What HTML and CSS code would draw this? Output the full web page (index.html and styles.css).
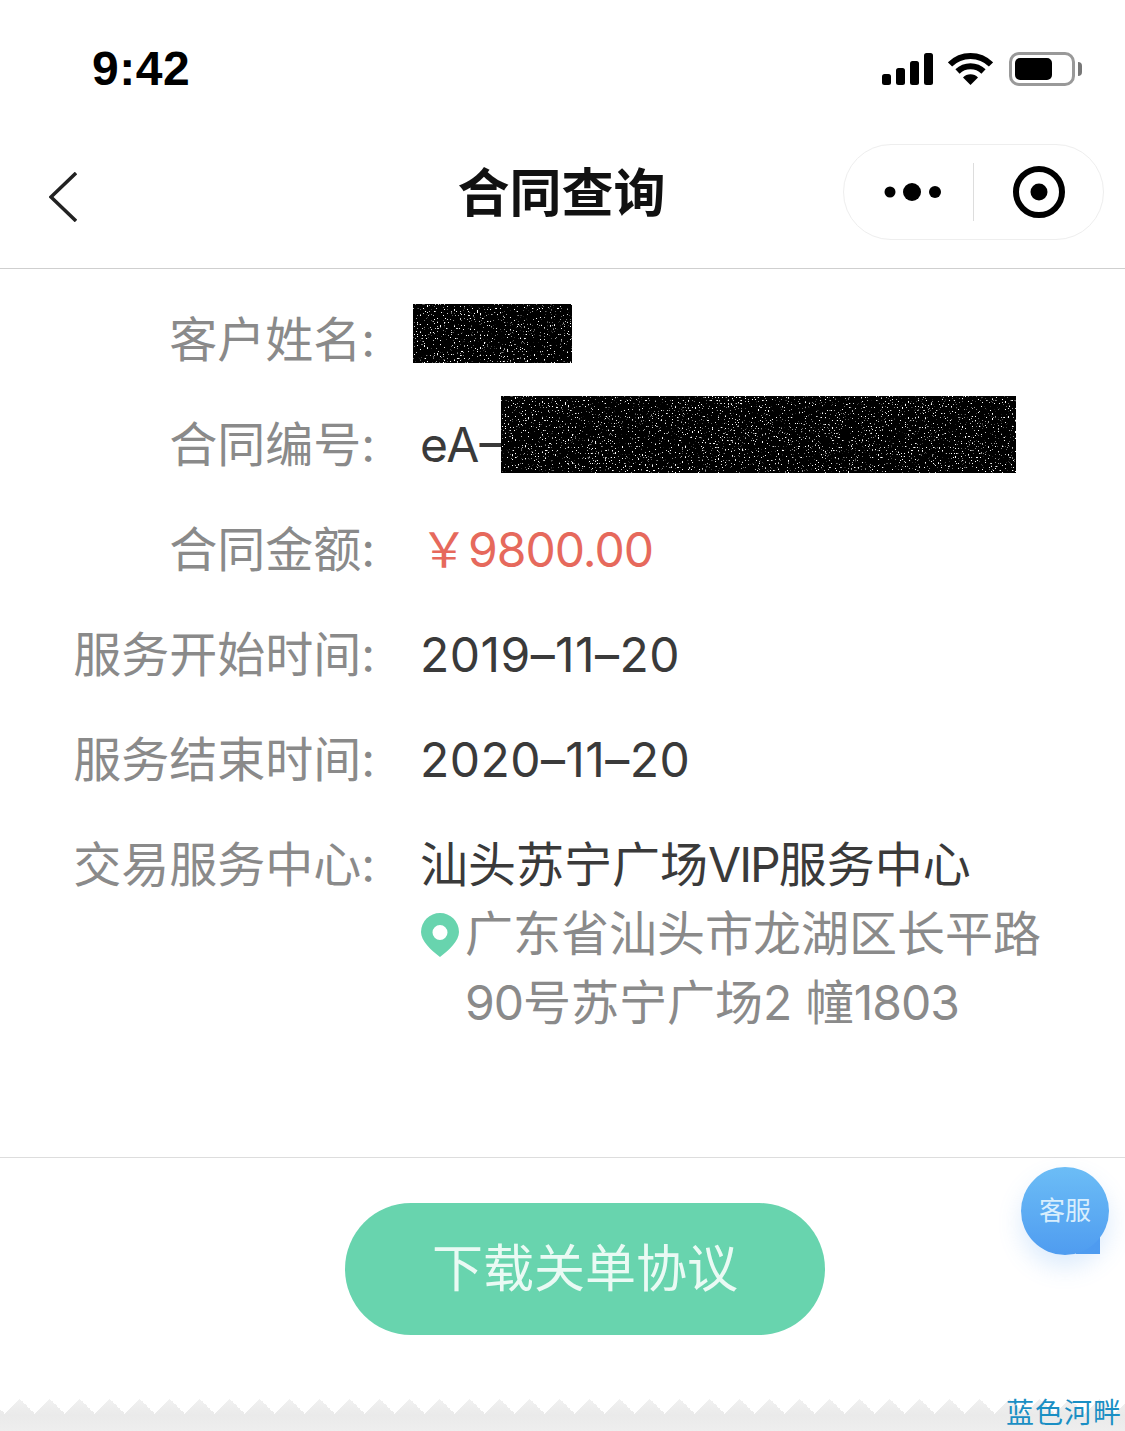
FILE: index.html

```html
<!DOCTYPE html>
<html lang="zh-CN">
<head>
  <meta charset="UTF-8" />
  <meta name="viewport" content="width=device-width, initial-scale=1.0"/>
  <title>合同查询</title>
  <link rel="stylesheet" href="styles.css">
</head>
<body>
  <svg class="defs" width="0" height="0" aria-hidden="true">
    <filter id="noise" x="0" y="0" width="100%" height="100%" color-interpolation-filters="sRGB">
      <feTurbulence type="fractalNoise" baseFrequency="0.7" numOctaves="1" seed="7"/>
      <feColorMatrix values="0 0 0 0 1  0 0 0 0 1  0 0 0 0 1  14 0 0 0 -8.9"/>
    </filter>
  </svg>

  <div class="status-bar">
    <span class="time">9:42</span>
    <div class="status-icons">
      <svg width="51" height="32" viewBox="0 0 51 32">
        <rect x="0" y="21" width="9" height="11" rx="2.5"/>
        <rect x="14" y="15" width="9" height="17" rx="2.5"/>
        <rect x="28" y="8" width="9" height="24" rx="2.5"/>
        <rect x="42" y="0" width="9" height="32" rx="2.5"/>
      </svg>
      <svg width="45" height="32" viewBox="0 0 45 32">
        <path d="M2 11.5a29 29 0 0 1 41 0" fill="none" stroke="#000" stroke-width="6"/>
        <path d="M9.500 18.500a18.500 18.500 0 0 1 26 0" fill="none" stroke="#000" stroke-width="6"/>
        <path d="M15 24.500a10.500 10.500 0 0 1 15 0L22.500 32z"/>
      </svg>
      <div class="battery">
        <div class="battery-body"><div class="battery-level"></div></div>
        <div class="battery-nub"></div>
      </div>
    </div>
  </div>

  <header class="nav">
    <svg class="back" width="28" height="50" viewBox="0 0 28 50">
      <path d="M27 1L2 25l25 24" fill="none" stroke="#222" stroke-width="3.500"/>
    </svg>
    <h1>合同查询</h1>
    <div class="capsule">
      <svg width="58" height="20" viewBox="0 0 58 20">
        <circle cx="6" cy="10" r="5.500"/>
        <circle cx="28" cy="10" r="9"/>
        <circle cx="51" cy="10" r="6"/>
      </svg>
      <span class="capsule-line"></span>
      <svg width="52" height="52" viewBox="0 0 52 52">
        <circle cx="26" cy="26" r="23" fill="none" stroke="#000" stroke-width="6"/>
        <circle cx="26" cy="26" r="8.500"/>
      </svg>
    </div>
  </header>

  <main class="info">
    <div class="row">
      <div class="label">客户姓名:</div>
      <div class="value"><svg class="redact redact-name"><rect width="100%" height="100%"/><rect class="specks" width="100%" height="100%"/></svg></div>
    </div>
    <div class="row">
      <div class="label">合同编号:</div>
      <div class="value">eA–<svg class="redact redact-no"><rect width="100%" height="100%"/><rect class="specks" width="100%" height="100%"/></svg></div>
    </div>
    <div class="row">
      <div class="label">合同金额:</div>
      <div class="value price">￥<span class="num">9800.00</span></div>
    </div>
    <div class="row">
      <div class="label">服务开始时间:</div>
      <div class="value date">2019–11–20</div>
    </div>
    <div class="row">
      <div class="label">服务结束时间:</div>
      <div class="value date">2020–11–20</div>
    </div>
    <div class="row">
      <div class="label">交易服务中心:</div>
      <div class="center">
        <div class="value">汕头苏宁广场<span class="vip">VIP</span>服务中心</div>
        <div class="address">
          <svg class="pin" width="38" height="44" viewBox="0 0 38 44">
            <path fill-rule="evenodd" fill="#68d4ae" d="M19 0a19 19 0 0 1 19 19c0 9-10 18-19 25C10 37 0 28 0 19A19 19 0 0 1 19 0zm0 12a7.500 7.500 0 1 0 0 15 7.500 7.500 0 0 0 0-15z"/>
          </svg>
          <div>广东省汕头市龙湖区长平路<br><span class="num">90</span>号苏宁广场2 幢<span class="num">1803</span></div>
        </div>
      </div>
    </div>
  </main>

  <footer class="footer">
    <button class="download"><span>下载关单协议</span></button>
    <div class="zigzag"></div>
  </footer>

  <div class="service">客服</div>
  <div class="watermark">蓝色河畔</div>
</body>
</html>
```

FILE: styles.css

```css
* { box-sizing: border-box; }

html, body {
  margin: 0;
  height: 1431px;
  overflow: hidden;
}
body {
  position: relative;
  width: 1125px;
  display: flex; flex-direction: column;
  background: #fff; color: #3a3a3a;
  font-family: "Inter", "Noto Sans CJK SC", sans-serif;
  font-size: 48px;
}
.defs { position: absolute; }

.status-bar {
  height: 130px; flex: none;
  display: flex; justify-content: space-between; align-items: flex-start;
  padding: 46px 43px 0 92px;
}
.time {
  font-family: "Liberation Sans", sans-serif;
  font-size: 48px; font-weight: bold; line-height: 46px;
  letter-spacing: 0.5px;
  color: #000;
}
.status-icons {
  display: flex; align-items: center; gap: 15px;
  padding-top: 6px;
}
.battery { display: flex; align-items: center; gap: 3px; margin-left: 1px; }
.battery-body {
  width: 66px; height: 34px;
  padding: 3px;
  border: 3px solid #999; border-radius: 10px;
}
.battery-level {
  width: 37px; height: 100%;
  background: #000; border-radius: 5px;
}
.battery-nub {
  width: 4px; height: 14px;
  background: #777; border-radius: 0 5px 5px 0;
}

.nav {
  height: 139px; flex: none;
  display: flex; align-items: center;
  position: relative;
  padding: 0 21px 14px 49px;
  border-bottom: 1px solid #cfcfcf;
}
.nav h1 {
  position: absolute; left: 0; right: 2px; top: 32px;
  margin: 0;
  text-align: center;
  font-family: "Noto Sans CJK SC", sans-serif;
  font-size: 52px; font-weight: 700; line-height: 56px;
  color: #111;
}
.back { flex: none; margin-top: 9px; }
.capsule {
  margin-left: auto;
  width: 261px; height: 96px;
  display: flex; align-items: center;
  padding-left: 40px;
  border: 1px solid #eee; border-radius: 48px;
}
.capsule-line {
  width: 1px; height: 58px;
  margin: 0 39px 0 31px;
  background: #ddd;
}

.info {
  flex: 1;
  display: flex; flex-direction: column; gap: 36px;
  padding-top: 36px;
}
.row {
  display: flex; gap: 45px;
  line-height: 69px;
}
.label {
  width: 375px; flex: none;
  text-align: right;
  color: #8a8a8a;
}
.value { display: flex; align-items: center; height: 69px; }
.num { letter-spacing: -1px; }
.date { letter-spacing: 0.45px; }
.vip { letter-spacing: -2px; }
.price { color: #e6695c; }
.redact { display: block; flex: none; }
.redact .specks { fill: #fff; filter: url(#noise); }
.redact-name {
  width: 159px; height: 59px;
  margin: -1px 0 11px -7px;
}
.redact-no {
  width: 515px; height: 77px;
  margin: -14px 0 6px -2px;
}
.address {
  display: flex; gap: 6px;
  margin-left: 1px;
  color: #8a8a8a;
}
.pin { flex: none; margin-top: 14px; }

.footer {
  height: 274px; flex: none;
  display: flex; flex-direction: column; justify-content: space-between;
  padding-top: 45px;
  border-top: 1px solid #ddd;
}
.download {
  width: 480px; height: 132px;
  margin-left: 345px;
  padding: 0 0 8px;
  border: none; border-radius: 66px;
  background: #68d4ae; color: #eafaf4;
  font-family: "Noto Sans CJK SC", sans-serif;
  font-size: 51px;
}
.zigzag {
  height: 32px;
  background:
    linear-gradient(135deg, #fff 25%, transparent 25%) 5px 0 / 30px 30px repeat-x,
    linear-gradient(225deg, #fff 25%, transparent 25%) 5px 0 / 30px 30px repeat-x,
    linear-gradient(#f1f1f1, #eaeaea 50%, #eeeeee);
}

.service {
  position: absolute; left: 1021px; top: 1167px;
  width: 88px; height: 88px;
  display: flex; align-items: center; justify-content: center;
  padding-bottom: 6px;
  border-radius: 50%;
  background: linear-gradient(#6cbdf6, #4f9cf0);
  box-shadow: 0 12px 24px #4f9cf033;
  color: #d8eefd;
  font-family: "Noto Sans CJK SC", sans-serif;
  font-size: 26px;
}
.service::after {
  content: "";
  position: absolute; right: 9px; bottom: 1px;
  width: 24px; height: 22px;
  background: #4f9cf0;
  z-index: -1;
}
.watermark {
  position: absolute; left: 1006px; top: 1395px;
  font-family: "Noto Sans CJK SC", sans-serif;
  font-size: 28px; line-height: 32px; letter-spacing: 1px;
  color: #1a8fc4;
}
```
